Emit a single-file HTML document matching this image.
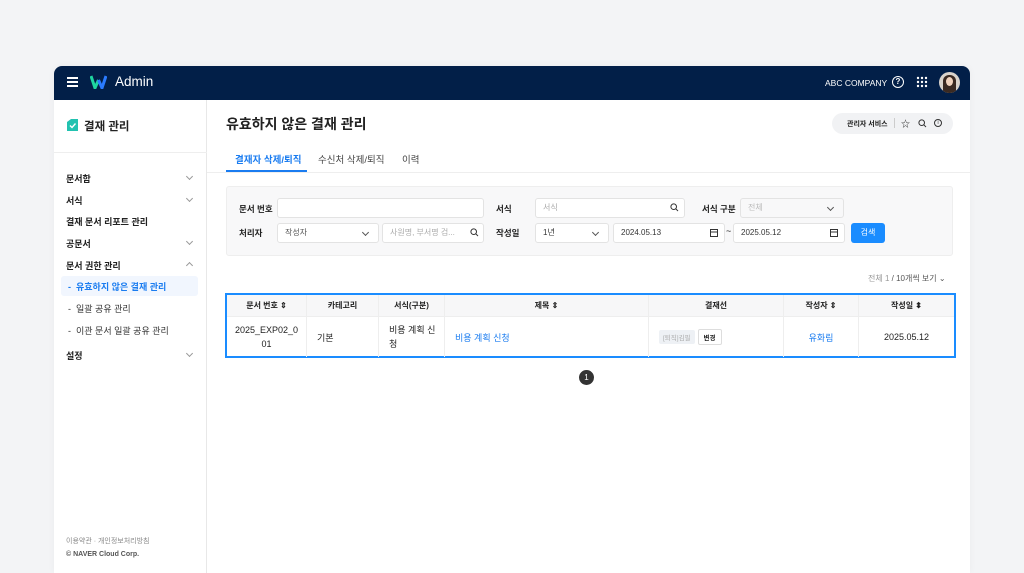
<!DOCTYPE html><html><head><meta charset="utf-8"><style>
*{box-sizing:border-box;margin:0;padding:0}
html{overflow:hidden;height:573px}
body{width:1024px;height:573px;background:#f3f4f6;font-family:"Liberation Sans","Noto Sans CJK KR",sans-serif;color:#222;position:relative;overflow:hidden;font-size:9px}
.a{position:absolute}
.panel{left:54px;top:66px;width:916px;height:507px;background:#fff;border-radius:8px 8px 0 0;overflow:hidden;box-shadow:0 0 8px rgba(0,0,0,.04)}
.hd{left:0;top:0;width:916px;height:34px;background:#021f48}
.side{left:0;top:34px;width:153px;height:500px;border-right:1px solid #e8e8e8}
.nav{left:12px;font-size:9px;font-weight:bold;color:#222}
.chev{right:14px;width:5px;height:5px;border-right:1px solid #999;border-bottom:1px solid #999;transform:rotate(45deg)}
.sub{left:14px;font-size:9px;color:#333}
.inp{background:#fff;border:1px solid #e3e3e3;border-radius:3px;height:20px;font-size:8px;color:#aaa;padding:0 7px;line-height:18px}
.lbl{font-size:8.5px;font-weight:bold;color:#222}
.th{top:0;height:22px;line-height:22px;text-align:center;font-size:8px;font-weight:bold;border-right:1px solid #eee}
.td{top:22px;height:40px;font-size:9px;border-right:1px solid #eee;display:flex;align-items:center}
.sel::after{content:"";position:absolute;right:10px;top:6px;width:4px;height:4px;border-right:1px solid #555;border-bottom:1px solid #555;transform:rotate(45deg)}
</style></head><body>
<div class="a panel">
 <div class="a hd">
  <div class="a" style="left:13px;top:11px;width:11px;height:1.5px;background:#fff;box-shadow:0 4px 0 #fff,0 8px 0 #fff"></div>
  <svg class="a" style="left:36px;top:9px" width="17" height="14" viewBox="0 0 17 14"><path d="M1 1 L5 13 L8.5 5" stroke="#1fd6a0" stroke-width="3" fill="none"/><path d="M8.5 5 L12 13 L16 1" stroke="#2a7bff" stroke-width="3" fill="none"/></svg>
  <div class="a" style="left:61px;top:8px;color:#fff;font-size:13.5px">Admin</div>
  <div class="a" style="left:771px;top:12px;color:#fff;font-size:8.5px">ABC COMPANY</div>
  <div class="a" style="left:838px;top:10px;width:12px;height:12px;border:1.3px solid #fff;border-radius:50%;color:#fff;font-size:8px;text-align:center;line-height:10px;font-weight:bold">?</div>
  <svg class="a" style="left:862px;top:10px" width="12" height="12"><g fill="#fff"><circle cx="2" cy="2" r="1.2"/><circle cx="6" cy="2" r="1.2"/><circle cx="10" cy="2" r="1.2"/><circle cx="2" cy="6" r="1.2"/><circle cx="6" cy="6" r="1.2"/><circle cx="10" cy="6" r="1.2"/><circle cx="2" cy="10" r="1.2"/><circle cx="6" cy="10" r="1.2"/><circle cx="10" cy="10" r="1.2"/></g></svg>
  <div class="a" style="left:885px;top:6px;width:21px;height:21px;border-radius:50%;background:#d9d3cc;overflow:hidden"><div class="a" style="left:4px;top:3px;width:13px;height:18px;border-radius:6px 6px 2px 2px;background:#3a2a22"></div><div class="a" style="left:7px;top:5px;width:7px;height:9px;border-radius:50%;background:#f0d2bd"></div></div>
 </div>
 <div class="a side">
  <svg class="a" style="left:13px;top:19px" width="11" height="12"><path d="M0 3 L4 0 H11 V12 H0Z" fill="#22c2b0"/><path d="M3 6.5 L5 8.5 L8.5 4.5" stroke="#fff" stroke-width="1.4" fill="none"/></svg>
  <div class="a" style="left:30px;top:18px;font-size:11.5px;font-weight:bold">결재 관리</div>
  <div class="a" style="left:0;top:52px;width:153px;height:1px;background:#eee"></div>
  <div class="a nav" style="top:72px">문서함</div><div class="a chev" style="top:74px"></div>
  <div class="a nav" style="top:94px">서식</div><div class="a chev" style="top:96px"></div>
  <div class="a nav" style="top:115px">결재 문서 리포트 관리</div>
  <div class="a nav" style="top:137px">공문서</div><div class="a chev" style="top:139px"></div>
  <div class="a nav" style="top:159px">문서 권한 관리</div><div class="a chev" style="top:163px;transform:rotate(225deg)"></div>
  <div class="a" style="left:7px;top:176px;width:137px;height:20px;background:#f1f6fe;border-radius:3px"></div>
  <div class="a sub" style="top:180px;color:#1a7cf0;font-weight:bold">-&nbsp; 유효하지 않은 결재 관리</div>
  <div class="a sub" style="top:202px">-&nbsp; 일괄 공유 관리</div>
  <div class="a sub" style="top:224px">-&nbsp; 이관 문서 일괄 공유 관리</div>
  <div class="a nav" style="top:249px">설정</div><div class="a chev" style="top:251px"></div>
  <div class="a" style="left:12px;top:436px;font-size:7px;color:#888">이용약관 · 개인정보처리방침</div>
  <div class="a" style="left:12px;top:451px;font-size:7px;color:#555;font-weight:bold">© NAVER Cloud Corp.</div>
 </div>
 <div class="a" style="left:172px;top:48px;font-size:14px;font-weight:bold">유효하지 않은 결재 관리</div>
 <div class="a" style="left:778px;top:47px;width:121px;height:21px;background:#f1f2f4;border-radius:11px"></div>
 <div class="a" style="left:793px;top:53px;font-size:7px;font-weight:bold">관리자 서비스</div>
 <div class="a" style="left:840px;top:52px;width:1px;height:10px;background:#ccc"></div>
 <div class="a" style="left:847px;top:51px;font-size:9px">☆</div>
 <svg class="a" style="left:864px;top:53px" width="9" height="9"><circle cx="3.7" cy="3.7" r="2.8" stroke="#333" fill="none"/><path d="M5.8 5.8 L8 8" stroke="#333"/></svg>
 <div class="a" style="left:880px;top:53px;width:8px;height:8px;border:1px solid #333;border-radius:50%;font-size:5px;text-align:center;line-height:6px">i</div>
 <div class="a" style="left:181px;top:86px;font-size:9.5px;color:#1a7cf0;font-weight:bold">결재자 삭제/퇴직</div>
 <div class="a" style="left:172px;top:104px;width:81px;height:2px;background:#1a7cf0"></div>
 <div class="a" style="left:264px;top:86px;font-size:9.5px;color:#444">수신처 삭제/퇴직</div>
 <div class="a" style="left:348px;top:86px;font-size:9.5px;color:#444">이력</div>
 <div class="a" style="left:153px;top:106px;width:763px;height:1px;background:#eee"></div>
 <div class="a" style="left:172px;top:120px;width:727px;height:70px;background:#f8f8f9;border:1px solid #eee;border-radius:3px"></div>
 <div class="a lbl" style="left:185px;top:137px">문서 번호</div>
 <div class="a inp" style="left:223px;top:132px;width:207px"></div>
 <div class="a lbl" style="left:442px;top:137px">서식</div>
 <div class="a inp" style="left:481px;top:132px;width:150px">서식</div>
 <div class="a lbl" style="left:648px;top:137px">서식 구분</div>
 <div class="a inp sel" style="left:686px;top:132px;width:104px;background:#f8f8f9;color:#bbb">전체</div>
 <div class="a lbl" style="left:185px;top:161px">처리자</div>
 <div class="a inp sel" style="left:223px;top:157px;width:102px;color:#555">작성자</div>
 <div class="a inp" style="left:328px;top:157px;width:102px">사원명, 부서명 검...</div>
 <div class="a lbl" style="left:442px;top:161px">작성일</div>
 <div class="a inp sel" style="left:481px;top:157px;width:74px;color:#333">1년</div>
 <div class="a inp" style="left:559px;top:157px;width:112px;color:#333">2024.05.13</div>
 <div class="a" style="left:672px;top:160px;font-size:9px">~</div>
 <div class="a inp" style="left:679px;top:157px;width:112px;color:#333">2025.05.12</div>
 <svg class="a" style="left:616px;top:137px" width="9" height="9"><circle cx="3.7" cy="3.7" r="2.8" stroke="#333" fill="none"/><path d="M5.8 5.8 L8 8" stroke="#333"/></svg>
 <svg class="a" style="left:416px;top:162px" width="9" height="9"><circle cx="3.7" cy="3.7" r="2.8" stroke="#333" fill="none"/><path d="M5.8 5.8 L8 8" stroke="#333"/></svg>
 <svg class="a" style="left:656px;top:162px" width="8" height="9"><rect x=".5" y="1.5" width="7" height="7" stroke="#333" fill="none"/><path d="M.5 4 H7.5" stroke="#333"/></svg>
 <svg class="a" style="left:776px;top:162px" width="8" height="9"><rect x=".5" y="1.5" width="7" height="7" stroke="#333" fill="none"/><path d="M.5 4 H7.5" stroke="#333"/></svg>
 <div class="a" style="left:797px;top:157px;width:34px;height:20px;background:#1a8cff;border-radius:3px;color:#fff;font-size:8px;text-align:center;line-height:20px">검색</div>
 <div class="a" style="left:814px;top:207px;font-size:8px;color:#555"><span style="color:#999">전체 1</span> / 10개씩 보기 ⌄</div>
 <div class="a" style="left:171px;top:227px;width:731px;height:65px;border:2px solid #1a8cff">
  <div class="a" style="left:0;top:0;width:727px;height:22px;background:#f7f7f8;border-bottom:1px solid #eee"></div>
  <div class="a th" style="left:0;width:80px">문서 번호 ⇕</div>
  <div class="a th" style="left:80px;width:72px">카테고리</div>
  <div class="a th" style="left:152px;width:66px">서식(구분)</div>
  <div class="a th" style="left:218px;width:204px">제목 ⇕</div>
  <div class="a th" style="left:422px;width:135px">결재선</div>
  <div class="a th" style="left:557px;width:75px">작성자 ⇕</div>
  <div class="a th" style="left:632px;width:95px;border:0">작성일 ⬍</div>
  <div class="a td" style="left:0;width:80px;justify-content:center;text-align:center;line-height:14px">2025_EXP02_0<br>01</div>
  <div class="a td" style="left:80px;width:72px;padding-left:10px">기본</div>
  <div class="a td" style="left:152px;width:66px;padding-left:10px;line-height:14px">비용 계획 신<br>청</div>
  <div class="a td" style="left:218px;width:204px;padding-left:10px;color:#1a7cf0">비용 계획 신청</div>
  <div class="a td" style="left:422px;width:135px;padding-left:10px"><span style="background:#eef1f5;color:#aaa;font-size:6.5px;padding:2px 4px;border-radius:2px">[퇴직]김필</span><span style="border:1px solid #ddd;font-size:6.5px;font-weight:bold;padding:2px 5px;border-radius:2px;margin-left:3px">변경</span></div>
  <div class="a td" style="left:557px;width:75px;justify-content:center;color:#1a7cf0">유화림</div>
  <div class="a td" style="left:632px;width:95px;justify-content:center;border:0">2025.05.12</div>
 </div>
 <div class="a" style="left:525px;top:304px;width:15px;height:15px;border-radius:50%;background:#333;color:#fff;font-size:8px;text-align:center;line-height:15px">1</div>
</div>
</body></html>
